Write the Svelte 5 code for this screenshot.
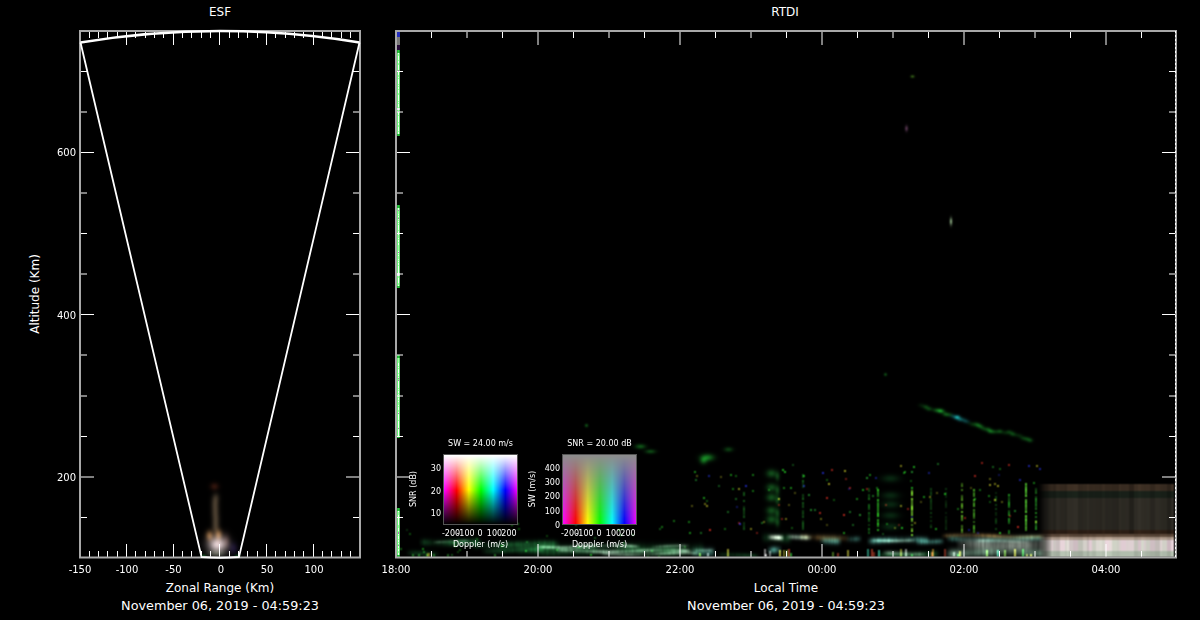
<script>
  const DATE = "November 06, 2019 - 04:59:23";

  // y ticks snapped to how the plot rasterised them
  const yTicks = [
    [71.5, 0], [112, 0], [152.5, 1], [193, 0], [233.5, 0], [274, 0],
    [314.5, 1], [355, 0], [396, 0], [436.5, 0], [477, 1], [517.5, 0],
  ];
  const esfX = [];
  for (let i = 1; i < 30; i++) esfX.push([Math.floor(80 + i * 9.3333) + 0.5, i % 5 === 0 && (i * 10 - 150) % 50 === 0]);
  const esfLabels = [[-150, 80], [-100, 127], [-50, 173.5], [0, 221], [50, 267], [100, 314]];

  const rtdiX = [];
  for (let i = 1; i < 22; i++) rtdiX.push([396 + i * 35.5, i % 4 === 0]);
  const rtdiLabels = ["18:00", "20:00", "22:00", "00:00", "02:00", "04:00"];

  const dopplerTicks = [["-200", 451], ["-100", 465.5], ["0", 480], ["100", 494.5], ["200", 509]];
  const insets = [
    { x: 444, kind: "sw", title: "SW = 24.00 m/s", ylabel: "SNR (dB)", ticks: [["30", 468], ["20", 490.5], ["10", 512.5]] },
    {
      x: 563, kind: "snr", title: "SNR = 20.00 dB", ylabel: "SW (m/s)",
      ticks: [["400", 467.5], ["300", 481.5], ["200", 495.5], ["100", 510.5], ["0", 524.5]],
    },
  ];

  function rng(seed) {
    return () => {
      seed = (seed + 0x6d2b79f5) | 0;
      let t = Math.imul(seed ^ (seed >>> 15), 1 | seed);
      t = (t + Math.imul(t ^ (t >>> 7), 61 | t)) ^ t;
      return ((t ^ (t >>> 14)) >>> 0) / 4294967296;
    };
  }

  // additive float buffer in page coordinates
  function field(w, h, ox, oy) {
    let buf = new Float32Array(w * h * 3);
    const put = (x, y, c, a) => {
      if (x < 0 || y < 0 || x >= w || y >= h) return;
      const i = (y * w + x) * 3;
      buf[i] += c[0] * a;
      buf[i + 1] += c[1] * a;
      buf[i + 2] += c[2] * a;
    };
    return {
      blob(cx, cy, rx, ry, c, a) {
        const x0 = Math.floor(cx - rx * 3 - ox), x1 = Math.ceil(cx + rx * 3 - ox);
        const y0 = Math.floor(cy - ry * 3 - oy), y1 = Math.ceil(cy + ry * 3 - oy);
        for (let y = y0; y <= y1; y++)
          for (let x = x0; x <= x1; x++) {
            const dx = (x + ox - cx) / rx, dy = (y + oy - cy) / ry;
            put(x, y, c, a * Math.exp(-(dx * dx + dy * dy) / 2));
          }
      },
      rect(x0, y0, x1, y1, c, a) {
        for (let y = y0 - oy; y < y1 - oy; y++)
          for (let x = x0 - ox; x < x1 - ox; x++) put(x, y, c, a);
      },
      soften(passes) {
        for (let p = 0; p < passes; p++) {
          const next = new Float32Array(buf.length);
          for (let y = 0; y < h; y++)
            for (let x = 0; x < w; x++)
              for (let c = 0; c < 3; c++) {
                let sum = 0, wt = 0;
                for (let dy = -1; dy <= 1; dy++)
                  for (let dx = -1; dx <= 1; dx++) {
                    const nx = x + dx, ny = y + dy;
                    if (nx < 0 || ny < 0 || nx >= w || ny >= h) continue;
                    const k = (2 - Math.abs(dx)) * (2 - Math.abs(dy));
                    sum += buf[(ny * w + nx) * 3 + c] * k;
                    wt += k;
                  }
                next[(y * w + x) * 3 + c] = sum / wt;
              }
          buf = next;
        }
      },
      flush(canvas) {
        const ctx = canvas.getContext("2d");
        const img = ctx.createImageData(w, h);
        for (let i = 0; i < w * h; i++) {
          img.data[i * 4] = buf[i * 3];
          img.data[i * 4 + 1] = buf[i * 3 + 1];
          img.data[i * 4 + 2] = buf[i * 3 + 2];
          img.data[i * 4 + 3] = 255;
        }
        ctx.putImageData(img, 0, 0);
      },
    };
  }

  const G = [22, 82, 40], P = [170, 205, 180], W = [255, 255, 245], T = [85, 170, 155];
  const B = [125, 95, 50], D = [22, 125, 34], S = [150, 160, 150];

  // [x0, x1, y, thickness, colour, strength]
  const streaks = [
    [405, 440, 553, 2, G, 0.8], [418, 482, 541.5, 2.4, G, 1], [432, 470, 541, 1, P, 0.4],
    [470, 560, 544, 2.4, G, 1], [480, 545, 550, 2, G, 0.9], [515, 705, 549, 3.8, G, 0.9],
    [535, 640, 546, 1.2, P, 0.65], [555, 692, 550.5, 1.4, P, 0.7], [600, 700, 553.5, 1.2, P, 0.55],
    [650, 690, 546, 1.1, P, 0.4], [690, 716, 551, 3, T, 0.6], [690, 715, 549, 1.2, P, 0.3],
    [716, 760, 555, 1.6, G, 0.6], [760, 792, 538, 3, G, 0.9], [766, 784, 537, 1.7, W, 1.3],
    [766, 782, 549, 2.4, T, 0.8], [785, 812, 536.5, 1.7, P, 0.7], [798, 826, 537, 2, B, 0.7],
    [812, 850, 538, 2.2, B, 0.5], [818, 842, 540, 2.3, T, 0.95], [845, 862, 538, 2, T, 0.6],
    [866, 930, 540, 2.2, T, 0.85], [870, 915, 539.5, 1.2, P, 0.65], [915, 945, 541.5, 1.8, T, 0.6],
    [882, 926, 553, 1.6, P, 0.5], [875, 940, 554, 2.2, G, 0.8],
    [940, 1045, 535.5, 1.5, B, 0.8], [945, 1045, 538.5, 2, T, 0.5], [955, 1045, 544, 4, S, 0.85],
    [945, 1045, 552.5, 3.2, [110, 150, 128], 0.85], [975, 1030, 541, 1.2, P, 0.3],
  ];

  function paintRtdi(canvas) {
    const f = field(780, 527, 396, 31);
    const r = rng(11);

    // quiet block on the right: soft vertical stripes, not single-pixel noise
    let stripe = 0.85, band = 0.9, tint = 0, hold = 0;
    for (let x = 1038; x < 1174; x++) {
      if (hold-- <= 0) {
        stripe = 0.68 + r() * 0.4;
        band = 0.88 + r() * 0.17;
        tint = r() - 0.5;
        hold = 1 + Math.floor(r() * 4);
      }
      const edge = Math.min(1, (x - 1038) / 14);
      f.rect(x, 498, x + 1, 530, [48, 45, 38], stripe * edge);
      f.rect(x, 484, x + 1, 491, [62, 48, 36], stripe * edge);
      f.rect(x, 491, x + 1, 498, [26, 34, 26], stripe * edge);
      f.rect(x, 530, x + 1, 534, [48, 32, 22], stripe * edge);
      f.rect(x, 534, x + 1, 537, [95, 75, 60], band * edge);
      f.rect(x, 537, x + 1, 540, [180, 160, 145], band * edge);
      f.rect(x, 540, x + 1, 551, [222 + tint * 14, 212 - tint * 12, 210 + tint * 10], band * edge);
      f.rect(x, 551, x + 1, 557, [180, 192, 176], band * edge);
    }

    for (const [x0, x1, y, t, c, a] of streaks) {
      const phase = r() * 6;
      for (let x = x0; x < x1; x++) {
        const edge = Math.min(1, (x - x0) / 6, (x1 - x) / 6);
        const yy = y + Math.sin(x / 17 + phase) * 0.9;
        // slow gating so long streaks break into patches
        const gate = 0.72 + 0.38 * Math.sin(x / 9 + phase) * Math.sin(x / 23 + phase * 2);
        const k = a * edge * gate * (0.78 + r() * 0.34);
        for (let py = Math.floor(yy - t * 3); py <= yy + t * 3 && py < 557; py++)
          f.rect(x, py, x + 1, py + 1, c, k * Math.exp(-((py - yy) ** 2) / (2 * t * t)));
      }
    }

    // slanted trail upper right, broken up into irregular blobs
    const trail = [[920, 405], [940, 411], [957, 417], [975, 424], [990, 430], [1012, 433], [1030, 440]];
    for (let i = 0; i < trail.length - 1; i++) {
      const [ax, ay] = trail[i], [bx, by] = trail[i + 1];
      for (let t = 0; t < 1; t += 0.14) {
        const x = ax + (bx - ax) * t, y = ay + (by - ay) * t + (r() - 0.5) * 2.2;
        const teal = x > 950 && x < 968;
        f.blob(x, y, 1.9, 1.4, teal ? [25, 150, 150] : D, 0.08 + r() * 0.5);
      }
    }

    // echoes left of the columns
    f.blob(707, 457, 4.5, 2.4, D, 0.9);
    f.blob(703, 460, 2.5, 2.5, D, 0.7);
    f.blob(728, 449, 3, 1.6, D, 0.5);
    f.blob(640, 446, 3.5, 1.6, D, 0.7);
    f.blob(650, 451, 3.5, 1.4, D, 0.6);
    f.blob(586, 425, 1.1, 1.1, D, 0.7);
    f.blob(912, 76, 1.3, 0.9, [70, 130, 30], 0.8);
    f.blob(906, 128, 1, 2, [130, 80, 120], 0.7);
    f.blob(950.5, 221, 0.8, 2.6, [150, 185, 140], 1);
    f.blob(885, 374, 1, 1, D, 0.7);

    // dark green blocks
    for (const y of [473, 487, 497, 510, 519]) {
      f.blob(771, y, 3.5, 2.8, [20, 85, 30], 0.9);
      f.blob(777, y + 3, 1.5, 3, [20, 85, 30], 0.7);
    }
    for (const y of [478, 495, 504, 515, 526]) f.blob(890, y, 6, 2.6, [15, 70, 30], 0.55);

    // bright and faint vertical columns
    const cols = [
      [877, 489, 535, [40, 170, 30], 1], [911, 490, 535, [110, 190, 40], 1.05], [961, 483, 534, [80, 150, 30], 0.95],
      [973, 487, 535, [60, 145, 30], 0.95], [1008, 492, 534, [30, 140, 30], 0.85], [1025, 483, 535, [70, 170, 40], 1],
      [1035, 484, 534, [30, 125, 30], 0.85], [743, 492, 530, [25, 110, 30], 0.65], [802, 474, 530, [25, 110, 30], 0.65],
      [868, 488, 535, [25, 130, 30], 0.65], [930, 488, 530, [25, 110, 30], 0.5],
      [995, 490, 530, [25, 110, 30], 0.5], [945, 488, 530, [25, 100, 30], 0.4],
    ];
    for (const [x, y0, y1, c, a] of cols) {
      for (let y = y0; y < y1; y += 2) {
        if (r() < 0.25) continue;
        f.rect(x, y, x + 2, y + 2, c, a * (0.5 + r() * 0.7));
      }
    }

    // scattered specks
    const specks = [[30, 170, 30], [30, 170, 30], [30, 130, 40], [190, 40, 30], [30, 40, 180], [150, 150, 30]];
    for (let i = 0; i < 130; i++) {
      const x = 690 + Math.floor(r() * 350), y = 462 + Math.floor(r() * 72);
      f.rect(x, y, x + 2, y + 2, specks[Math.floor(r() * specks.length)], 0.4 + r() * 0.6);
    }
    for (let i = 0; i < 40; i++) {
      const x = 400 + Math.floor(r() * 300), y = 520 + Math.floor(r() * 37);
      f.rect(x, y, x + 2, y + 2, specks[Math.floor(r() * 3)], 0.3 + r() * 0.5);
    }

    // short bars sitting on the axis
    const bars = [[190, 190, 60], [110, 180, 50], [40, 160, 50], [170, 60, 40], [170, 170, 170], [150, 100, 30], [50, 170, 140]];
    for (let i = 0; i < 34; i++) {
      const x = 690 + Math.floor(r() * 345), h = 3 + Math.floor(r() * 6);
      f.rect(x, 557 - h, x + 2, 557, bars[Math.floor(r() * bars.length)], 0.55 + r() * 0.35);
    }
    for (const x of [412, 418, 426, 433, 447, 494]) f.rect(x, 554, x + 2, 557, [40, 130, 40], 0.7);
    f.rect(427, 553, 430, 557, [120, 90, 20], 0.9);

    f.soften(1);

    // strip at the start of the record stays crisp
    const segs = [[50, 136], [205, 288], [355, 438], [508, 557]];
    for (const [a, b] of segs) {
      for (let y = a; y < b; y++) {
        const end = Math.min(y - a, b - y);
        const odd = r();
        const core = end < 3 ? [40, 200, 60] : odd < 0.04 ? [190, 110, 190] : odd < 0.35 ? [170, 250, 170] : [250, 254, 250];
        const side = end < 3 ? [30, 170, 50] : [105, 240, 120];
        f.rect(397, y, 398, y + 1, side, 1);
        f.rect(398, y, 399, y + 1, core, 1);
        f.rect(399, y, 400, y + 1, side, 0.9);
      }
    }
    f.rect(397, 31, 400, 37, [40, 50, 210], 0.9);
    f.rect(397, 37, 400, 45, [150, 150, 150], 0.8);
    f.rect(397, 45, 400, 50, [40, 10, 60], 0.9);
    f.rect(397, 273, 400, 276, [120, 0, 120], 0.9);
    f.rect(397, 108, 400, 110, [120, 0, 120], 0.9);

    f.flush(canvas);
  }

  function paintEsf(canvas) {
    const f = field(280, 527, 80, 31);
    const r = rng(4);
    f.blob(214, 486, 3, 2.6, [62, 26, 16], 0.8);
    for (let y = 496; y < 532; y += 3) f.blob(215 + r() - 0.5, y, 2.6, 3, [50, 42, 32], 0.6);
    f.blob(209, 535, 2.6, 3.5, [150, 105, 60], 0.8);
    f.blob(218, 534, 2.6, 3.5, [150, 105, 60], 0.8);
    f.blob(226, 540, 2.5, 5, [70, 48, 44], 0.6);
    f.blob(217, 544, 6.5, 5.5, [240, 220, 222], 0.95);
    f.blob(216, 553, 6, 2.5, [100, 110, 90], 0.5);
    f.blob(233, 548, 3, 4, [30, 20, 55], 0.8);
    f.blob(203, 556, 1.6, 1.2, [30, 120, 50], 0.9);
    f.blob(237, 556, 1.6, 1.2, [30, 120, 50], 0.9);
    f.soften(1);
    f.flush(canvas);
  }

  function hsl(h, s, l) {
    const k = (n) => (n + h / 30) % 12;
    const a = s * Math.min(l, 1 - l);
    const c = (n) => 255 * (l - a * Math.max(-1, Math.min(k(n) - 3, 9 - k(n), 1)));
    return [c(0), c(8), c(4)];
  }

  function paintInset(canvas, kind) {
    const w = canvas.width, h = canvas.height;
    const ctx = canvas.getContext("2d");
    const img = ctx.createImageData(w, h);
    for (let y = 0; y < h; y++)
      for (let x = 0; x < w; x++) {
        const hue = (300 + (360 * x) / w) % 360, v = 1 - y / h;
        const [cr, cg, cb] = kind === "sw" ? hsl(hue, 1, v) : hsl(hue, 1 - v, 0.5 + 0.05 * v);
        const i = (y * w + x) * 4;
        img.data[i] = cr;
        img.data[i + 1] = cg;
        img.data[i + 2] = cb;
        img.data[i + 3] = 255;
      }
    ctx.putImageData(img, 0, 0);
  }
</script>

<main class="page">
  <section class="panel esf">
    <div class="title">ESF</div>
    <div class="plot">
      <canvas width="280" height="527" use:paintEsf></canvas>
      <svg class="overlay" viewBox="80 31 280 527" width="280" height="527">
        <g class="ticks">
          {#each yTicks as [y, major]}
            <path d="M80 {y}h{major ? 14 : 7}M360 {y}h-{major ? 14 : 7}" />
          {/each}
          {#each esfX as [x, major]}
            <path d="M{x} 558v-{major ? 14 : 7}M{x} 31v{major ? 14 : 7}" />
          {/each}
        </g>
        <rect class="frame" x="80" y="31" width="280" height="526.5" />
        <path class="arc" d="M80.500 42.500Q220 19.500 359.500 42.500" />
        <path class="fan" d="M80.500 42.500L201.500 557Q220 558.500 239 557L359.500 42.500" />
        {#each esfLabels as [v, x]}
          <text class="tick" {x} y="573" text-anchor="middle">{v}</text>
        {/each}
        <text class="tick" x="76" y="156" text-anchor="end">600</text>
        <text class="tick" x="76" y="318.500" text-anchor="end">400</text>
        <text class="tick" x="76" y="481" text-anchor="end">200</text>
        <text class="axis" transform="translate(39 294) rotate(-90)" text-anchor="middle">Altitude (Km)</text>
      </svg>
    </div>
    <div class="xlabel">Zonal Range (Km)</div>
    <div class="date">{DATE}</div>
  </section>

  <section class="panel rtdi">
    <div class="title">RTDI</div>
    <div class="plot">
      <canvas width="780" height="527" use:paintRtdi></canvas>
      {#each insets as inset}
        <canvas
          class="inset"
          width="73"
          height="69"
          style="left: {inset.x - 396}px"
          use:paintInset={inset.kind}
        ></canvas>
      {/each}
      <svg class="overlay" viewBox="396 31 780 527" width="780" height="527">
        <g class="ticks">
          {#each yTicks as [y, major]}
            <path d="M396 {y}h{major ? 14 : 7}M1176 {y}h-{major ? 14 : 7}" />
          {/each}
          {#each rtdiX as [x, major]}
            <path d="M{x} 558v-{major ? 14 : 7}M{x} 31v{major ? 14 : 7}" />
          {/each}
        </g>
        <rect class="frame" x="396" y="31" width="780" height="526.5" />
        <path class="edge" d="M1175.500 31V558" />
        {#each rtdiLabels as label, i}
          <text class="tick" x={396 + i * 142} y="573" text-anchor="middle">{label}</text>
        {/each}
        {#each insets as inset}
          <rect class="inset-frame" x={inset.x - 0.5} y="454.500" width="74" height="70" />
          <text class="small" x={inset.x + 36.500} y="446" text-anchor="middle">{inset.title}</text>
          <text class="small" x={inset.x + 36.500} y="547" text-anchor="middle">Doppler (m/s)</text>
          <text
            class="small"
            transform="translate({inset.x - 28} 489) rotate(-90)"
            text-anchor="middle">{inset.ylabel}</text
          >
          {#each inset.ticks as [label, y]}
            <text class="small" x={inset.x - 3} y={y + 3} text-anchor="end">{label}</text>
          {/each}
          {#each dopplerTicks as [label, x]}
            <text class="small" x={x + inset.x - 444} y="536" text-anchor="middle">{label}</text>
          {/each}
        {/each}
      </svg>
    </div>
    <div class="xlabel">Local Time</div>
    <div class="date">{DATE}</div>
  </section>
</main>

<style>
  :global(body) {
    background: #000;
  }
  .page {
    display: flex;
    gap: 36px;
    box-sizing: border-box;
    width: 1200px;
    height: 620px;
    padding-left: 80px;
    background: #000;
    color: #fff;
    font-family: "DejaVu Sans", sans-serif;
    overflow: hidden;
  }
  .panel {
    display: flex;
    flex-direction: column;
    align-items: center;
  }
  .esf {
    width: 280px;
  }
  .rtdi {
    width: 780px;
  }
  .title {
    height: 31px;
    line-height: 25px;
    font-size: 12px;
  }
  .rtdi .title {
    margin-left: -2px;
  }
  .plot {
    position: relative;
    height: 527px;
    margin-bottom: 22px;
  }
  .plot canvas {
    display: block;
  }
  .plot .inset {
    position: absolute;
    top: 424px;
  }
  .overlay {
    position: absolute;
    top: 0;
    left: 0;
    overflow: visible;
  }
  .xlabel {
    line-height: 16px;
    font-size: 12px;
  }
  .date {
    line-height: 20px;
    font-size: 12.8px;
    white-space: nowrap;
  }
  .ticks path {
    fill: none;
    stroke: #fff;
    stroke-width: 1;
  }
  .frame {
    fill: none;
    stroke: #a8a8a8;
    stroke-width: 2;
  }
  .arc {
    fill: none;
    stroke: #fff;
    stroke-width: 2.4;
  }
  .fan {
    fill: none;
    stroke: #fff;
    stroke-width: 1.8;
  }
  .edge {
    fill: none;
    stroke: #fff;
    stroke-width: 1;
    stroke-dasharray: 2 2;
  }
  .inset-frame {
    fill: none;
    stroke: #555;
    stroke-width: 1;
  }
  text {
    fill: #fff;
  }
  .tick {
    font-size: 10px;
  }
  .axis {
    font-size: 12px;
  }
  .small {
    font-size: 8px;
  }
</style>
